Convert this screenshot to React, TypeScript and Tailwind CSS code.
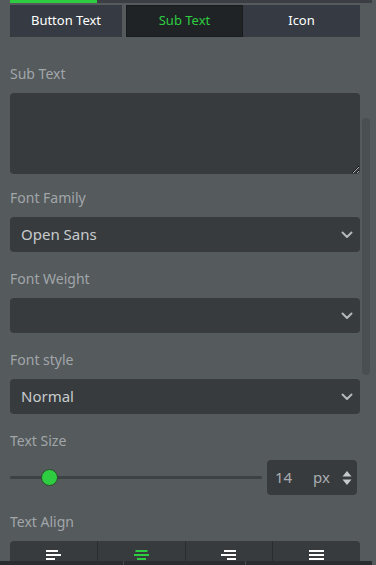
import React, { useState } from 'react';

const font = { fontFamily: '"Noto Sans", "Open Sans", sans-serif' };

function Chevron() {
    return (
        <svg width="12" height="8" viewBox="0 0 12 8" className="text-[#b4b8bb]">
            <path d="M1.5 1.5 L6 6 L10.5 1.5" fill="none" stroke="currentColor" strokeWidth="2" strokeLinecap="round" strokeLinejoin="round" />
        </svg>
    );
}

function SelectBox({ value }: { value: string }) {
    return (
        <div className="h-[35px] rounded bg-[#373b3e] flex items-center justify-between pl-[11px] pr-[7px]">
            <span className="text-[15px] text-[#c8cbcd]">{value}</span>
            <Chevron />
        </div>
    );
}

function Field({ label, top, children }: { label: string; top: string; children: React.ReactNode }) {
    return (
        <div className={top}>
            <div className="text-[14px] leading-[20px] text-[#a1a6a9]">{label}</div>
            <div className="mt-[9px]">{children}</div>
        </div>
    );
}

// widths of the three bars, per align icon
function AlignIcon({ kind, active }: { kind: 'left' | 'center' | 'right' | 'justify'; active?: boolean }) {
    const bars = kind === 'justify' ? [15, 15, 15] : [12, 15, 9];
    const x = (w: number) => (kind === 'left' || kind === 'justify' ? 0 : kind === 'right' ? 15 - w : (15 - w) / 2);
    return (
        <svg width="15" height="11" viewBox="0 0 15 11" className={active ? 'text-[#2ecc40]' : 'text-white'}>
            {bars.map((w, i) => (
                <rect key={i} x={x(w)} y={i * 4} width={w} height="2" fill="currentColor" />
            ))}
        </svg>
    );
}

export default function App() {
    const [tab, setTab] = useState('Sub Text');
    const [align, setAlign] = useState('center');
    const tabs = ['Button Text', 'Sub Text', 'Icon'];

    return (
        <div className="relative w-[376px] h-[565px] overflow-hidden bg-[#555a5d]" style={font}>
            <div className="ml-[10px] w-[362px] h-[3px] bg-[#3b3f43]">
                <div className="w-[87px] h-full bg-[#2ecc40]" />
            </div>

            <div className="mt-[2px] mx-[10px] flex gap-[4px] h-[32px]">
                {tabs.map(t => (
                    <button
                        key={t}
                        onClick={() => setTab(t)}
                        className={
                            'flex items-center justify-center text-[13px] ' +
                            (t === tab
                                ? 'bg-[#1f2326] text-[#2ecc40] border border-[#191c1e]'
                                : 'bg-[#363b43] text-white') +
                            (t === 'Button Text' ? ' w-[112px]' : ' w-[117px]') +
                            (t === 'Icon' ? ' -ml-[4px]' : '')
                        }
                    >
                        {t}
                    </button>
                ))}
            </div>

            <div className="pl-[10px] w-[360px]">
                <Field label="Sub Text" top="mt-[27px]">
                    <textarea className="block w-full h-[81px] rounded bg-[#373b3e] resize-y outline-none" />
                </Field>

                <Field label="Font Family" top="mt-[14px]">
                    <SelectBox value="Open Sans" />
                </Field>

                <Field label="Font Weight" top="mt-[17px]">
                    <SelectBox value="" />
                </Field>

                <Field label="Font style" top="mt-[17px]">
                    <SelectBox value="Normal" />
                </Field>

                <Field label="Text Size" top="mt-[17px]">
                    <div className="flex items-center">
                        <div className="relative w-[252px] h-[3px] rounded-full bg-[#3d4245]">
                            <div className="absolute left-[31px] -top-[7px] w-[17px] h-[17px] rounded-full bg-[#2ecc40] border border-[#2a4a2e]" />
                        </div>
                        <div className="ml-[5px] w-[90px] h-[35px] rounded bg-[#373b3e] flex items-center pl-[8px] pr-[5px] text-[15px] text-[#a9adb0]">
                            <span className="w-[38px]">14</span>
                            <span>px</span>
                            <svg width="10" height="16" viewBox="0 0 10 16" className="ml-auto text-[#c6c9cb]">
                                <path d="M5 1 L9.5 6.5 H0.5 Z M5 15 L9.5 9.5 H0.5 Z" fill="currentColor" />
                            </svg>
                        </div>
                    </div>
                </Field>

                <Field label="Text Align" top="mt-[17px]">
                    <div className="flex h-[30px] rounded-t bg-[#373b3e]">
                        {(['left', 'center', 'right', 'justify'] as const).map((k, i) => (
                            <button
                                key={k}
                                onClick={() => setAlign(k)}
                                className={'flex-1 flex justify-center pt-[9px] ' + (i > 0 ? 'border-l border-[#2b2e31]' : '')}
                            >
                                <AlignIcon kind={k} active={align === k} />
                            </button>
                        ))}
                    </div>
                </Field>
            </div>

            <div className="absolute right-[6px] top-[118px] w-[8px] h-[257px] rounded-full bg-[#4a4f52]" />

            <div className="absolute left-0 bottom-0 w-[372px] h-[4px] bg-[#2a2d30] flex">
                <div className="w-[123px]" />
                <div className="w-[122px] border-l border-[#45494c]" />
                <div className="flex-1 border-l border-[#45494c]" />
            </div>
        </div>
    );
}
